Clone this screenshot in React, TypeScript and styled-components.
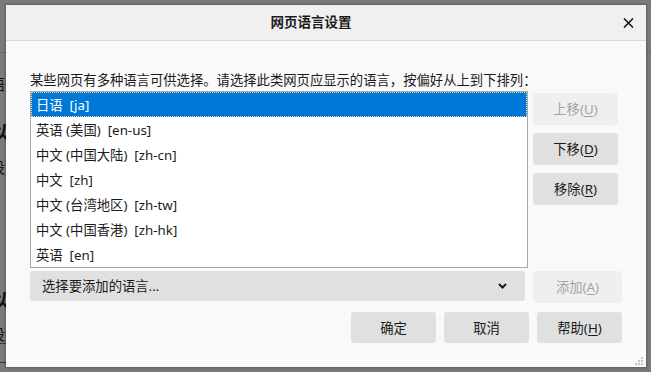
import React from "react";
import styled, { createGlobalStyle } from "styled-components";

const FONT = `"Noto Sans", "Noto Sans CJK SC", sans-serif`;

const languages = [
  { name: "日语", code: "ja" },
  { name: "英语 (美国)", code: "en-us" },
  { name: "中文 (中国大陆)", code: "zh-cn" },
  { name: "中文", code: "zh" },
  { name: "中文 (台湾地区)", code: "zh-tw" },
  { name: "中文 (中国香港)", code: "zh-hk" },
  { name: "英语", code: "en" },
];

const GlobalStyle = createGlobalStyle`
  html, body {
    margin: 0;
    padding: 0;
    background: #7a7a7a;
  }
  * {
    box-sizing: border-box;
  }
`;

const App = () => {
  const [selected, setSelected] = React.useState(0);

  return (
    <Screen>
      <GlobalStyle />
      <Backdrop>
        <PageText $gap={22}>语言</PageText>
        <PageHeading $gap={29}>以</PageHeading>
        <PageText $gap={16}>设置</PageText>
        <PageHeading $gap={114}>以</PageHeading>
        <PageText $gap={15}>设置</PageText>
        <PageInput />
      </Backdrop>

      <Dialog>
        <Header>
          <Title>网页语言设置</Title>
          <CloseButton aria-label="关闭">
            <svg width="11" height="10" viewBox="0 0 11 10">
              <path d="M1 0.5 L10 9.5 M10 0.5 L1 9.5" stroke="#1a1a1a" strokeWidth="1.6" fill="none" />
            </svg>
          </CloseButton>
        </Header>

        <Body>
          <Description>
            某些网页有多种语言可供选择。请选择此类网页应显示的语言，按偏好从上到下排列：
          </Description>

          <ListRow>
            <ListBox>
              {languages.map((lang, i) => (
                <ListItem key={lang.code} $selected={i === selected} onClick={() => setSelected(i)}>
                  {lang.name}  [{lang.code}]
                </ListItem>
              ))}
            </ListBox>
            <SideButtons>
              <Button disabled>
                上移(<u>U</u>)
              </Button>
              <Button>
                下移(<u>D</u>)
              </Button>
              <Button>
                移除(<u>R</u>)
              </Button>
            </SideButtons>
          </ListRow>

          <AddRow>
            <Select>
              <span>选择要添加的语言...</span>
              <svg width="9" height="6" viewBox="0 0 9 6">
                <path d="M1 1 L4.5 4.5 L8 1" stroke="#1a1a1a" strokeWidth="2" fill="none" />
              </svg>
            </Select>
            <Button disabled $wide>
              添加(<u>A</u>)
            </Button>
          </AddRow>

          <Footer>
            <Button>确定</Button>
            <Button>取消</Button>
            <Button>
              帮助(<u>H</u>)
            </Button>
          </Footer>
        </Body>

        <Grip width="10" height="10" viewBox="0 0 10 10">
          <rect x="7" y="1" width="2" height="2" fill="#c4c4c4" />
          <rect x="4" y="4" width="2" height="2" fill="#c4c4c4" />
          <rect x="7" y="4" width="2" height="2" fill="#c4c4c4" />
          <rect x="1" y="7" width="2" height="2" fill="#c4c4c4" />
          <rect x="4" y="7" width="2" height="2" fill="#c4c4c4" />
          <rect x="7" y="7" width="2" height="2" fill="#c4c4c4" />
        </Grip>
      </Dialog>
    </Screen>
  );
};

const Screen = styled.div`
  position: relative;
  width: 651px;
  height: 372px;
  overflow: hidden;
  background: #7a7a7a;
  font-family: ${FONT};
`;

const Backdrop = styled.div`
  display: flex;
  flex-direction: column;
  align-items: flex-start;
  margin-left: -10px;
  padding-top: 52px;
  overflow: hidden;
  height: 372px;

  &::before {
    content: "";
    align-self: stretch;
    border-top: 1px solid #6a6a6a;
  }
`;

const PageText = styled.div<{ $gap: number }>`
  margin-top: ${(p) => p.$gap}px;
  font-size: 15px;
  line-height: 18px;
  color: #111;
  white-space: nowrap;
`;

const PageHeading = styled(PageText)`
  font-size: 18px;
  font-weight: 700;
  line-height: 20px;
`;

const PageInput = styled.div`
  width: 20px;
  height: 20px;
  flex: none;
  border: 1px solid #3a3a3a;
`;

const Dialog = styled.div`
  position: absolute;
  left: 6px;
  top: 5px;
  width: 640px;
  height: 362px;
  background: #f9f9f9;
  box-shadow: 0 0 2px 1px rgba(0, 0, 0, 0.25);
  display: flex;
  flex-direction: column;
  color: #1b1b1b;
  font-size: 13.33px;
`;

const Header = styled.div`
  height: 36px;
  flex: none;
  display: flex;
  align-items: center;
  padding-right: 6px;
  background: #f0f0f0;
  border-bottom: 1px solid #d8d8d8;
`;

const Title = styled.div`
  flex: 1;
  text-align: center;
  font-size: 13.5px;
  font-weight: 700;
  line-height: 18px;
  color: #1b1b1b;
  padding-bottom: 1px;
`;

const CloseButton = styled.button`
  width: 24px;
  height: 24px;
  border: none;
  background: transparent;
  padding: 0;
  display: flex;
  align-items: center;
  justify-content: center;
`;

const Body = styled.div`
  flex: 1;
  display: flex;
  flex-direction: column;
  padding: 0 24px;
`;

const Description = styled.div`
  margin-top: 30px;
  line-height: 18px;
  height: 18px;
  white-space: nowrap;
`;

const ListRow = styled.div`
  margin-top: 2px;
  display: grid;
  grid-template-columns: 1fr 89px;
  column-gap: 5px;
  align-items: start;
`;

const ListBox = styled.div`
  height: 177px;
  background: #fff;
  border: 1px solid #a9a9a9;
  display: flex;
  flex-direction: column;
`;

const ListItem = styled.div<{ $selected: boolean }>`
  height: 25px;
  display: flex;
  align-items: center;
  padding-left: 4px;
  white-space: pre;
  line-height: 18px;
  color: ${(p) => (p.$selected ? "#fff" : "#1b1b1b")};
  background: ${(p) => (p.$selected ? "#0078d7" : "transparent")};
  border: 1px dotted ${(p) => (p.$selected ? "#e9dca8" : "transparent")};
`;

const SideButtons = styled.div`
  padding-top: 2px;
  display: flex;
  flex-direction: column;
  gap: 8px;
`;

const Button = styled.button<{ $wide?: boolean }>`
  width: ${(p) => (p.$wide ? "89px" : "85px")};
  height: 32px;
  border: none;
  border-radius: 3px;
  background: #e0e0e0;
  color: #1b1b1b;
  font-family: ${FONT};
  font-size: 13.33px;
  line-height: 18px;
  padding: 0;
  display: flex;
  align-items: center;
  justify-content: center;

  &:disabled {
    background: #efefef;
    color: #a3a3a3;
  }

  u {
    text-underline-offset: 2px;
  }
`;

const AddRow = styled.div`
  margin-top: 3px;
  display: grid;
  grid-template-columns: 1fr 89px;
  column-gap: 8px;
  align-items: start;
`;

const Select = styled.div`
  height: 30px;
  border-radius: 3px;
  background: #e0e0e0;
  display: flex;
  align-items: center;
  justify-content: space-between;
  padding: 0 18px 0 12px;
  line-height: 18px;
`;

const Footer = styled.div`
  margin-top: 9px;
  display: flex;
  justify-content: flex-end;
  gap: 8px;

  & > button {
    height: 31px;
  }
`;

const Grip = styled.svg`
  position: absolute;
  right: 2px;
  bottom: 1px;
`;

export default App;
